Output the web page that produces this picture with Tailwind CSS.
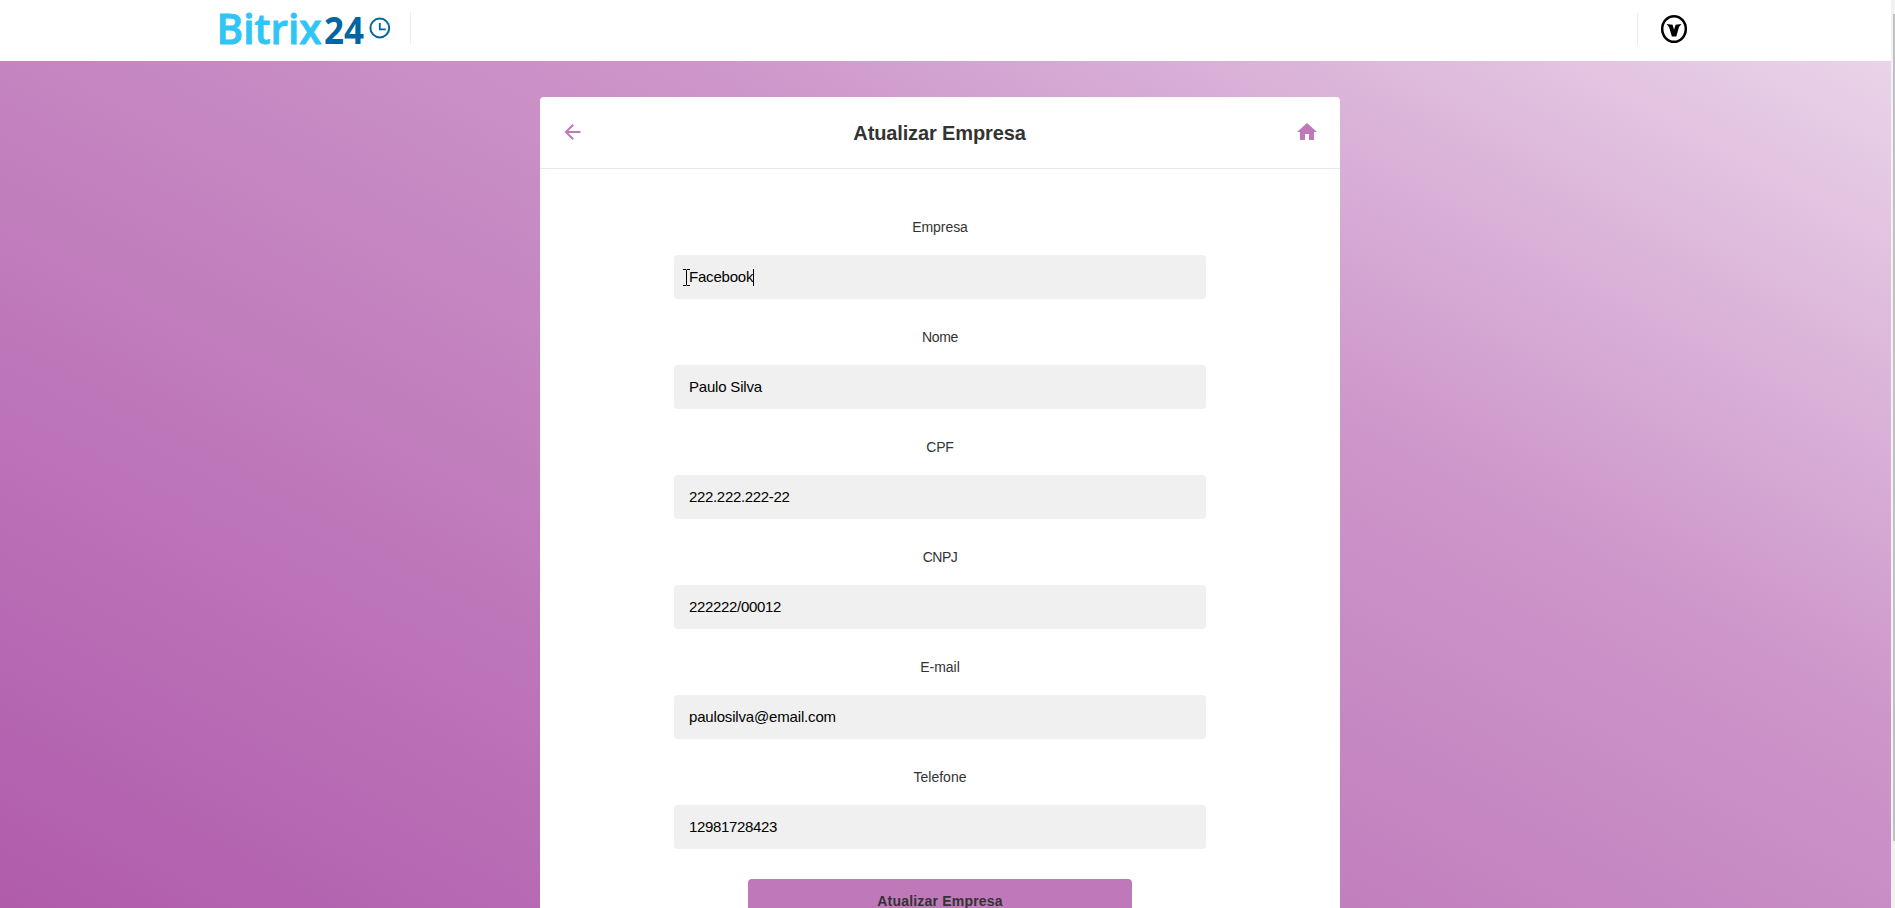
<!DOCTYPE html>
<html lang="pt-BR">
<head>
<meta charset="utf-8">
<title>Atualizar Empresa</title>
<script src="https://cdn.jsdelivr.net/npm/@tailwindcss/browser@4"></script>
</head>
<body class="flex h-[908px] overflow-hidden bg-[#f1f1f1] font-['Liberation_Sans',Arial,sans-serif] text-[#333]">
<div class="flex h-full w-[1891px] flex-col">
  <header class="flex h-[61px] shrink-0 items-start justify-between bg-white pr-[203px] pl-[216px]">
    <div class="flex items-start">
      <svg class="h-[60px] w-[194px] overflow-visible" viewBox="0 0 194 60" role="img">
        <g font-family="Open Sans, sans-serif" font-weight="600">
          <text x="0.500" y="43.700" font-size="41.500" textLength="105" lengthAdjust="spacingAndGlyphs" fill="#2fc6f6" stroke="#2fc6f6" stroke-width="0.9">Bitrix</text>
          <text x="108" y="44" font-size="37" font-weight="700" textLength="40" lengthAdjust="spacingAndGlyphs" fill="#0066a1">24</text>
        </g>
        <circle cx="163.800" cy="28" r="9.400" fill="none" stroke="#0066a1" stroke-width="2"/>
        <path d="M163.800 23v6.300h6" fill="none" stroke="#0066a1" stroke-width="1.800"/>
      </svg>
      <div class="mt-3 h-8 w-px bg-[#ececec]"></div>
    </div>
    <div class="flex items-start pt-[13px]">
      <div class="mr-[22px] h-8 w-px bg-[#ececec]"></div>
      <svg class="mt-px h-[30px] w-7" viewBox="0 0 28 30">
        <ellipse cx="14" cy="15" rx="11.800" ry="12.800" fill="none" stroke="#000" stroke-width="2.500"/>
        <path d="M6.600 10l6 .8L14 15.800l1.600-5 5.800-.8-2.400 3-2.700 9.600h-4.400L9 13z"/>
      </svg>
    </div>
  </header>
  <main class="flex min-h-0 flex-1 items-start justify-center overflow-hidden bg-[linear-gradient(28.7deg,#b05cab_0%,#cd96ca_65%,#ead4e9_100%)] pt-9 pr-[11px]">
    <section class="h-[811px] w-[800px] overflow-hidden rounded-t bg-white">
      <div class="flex h-[72px] items-center justify-between border-b border-[#e8e8e8] pr-[21px] pb-px pl-5">
        <svg class="size-6 fill-[#bf79ba]" viewBox="0 0 24 24"><path d="M20.500 11H8.330l5.590-5.590L12.500 4l-8 8 8 8 1.410-1.410L8.330 13H20.500z"/></svg>
        <h1 class="pt-0.5 text-xl font-bold tracking-[-0.13px]">Atualizar Empresa</h1>
        <svg class="size-6 fill-[#bf79ba]" viewBox="0 0 24 24"><path d="M10 20v-6h4v6h5v-8h3L12 3 2 12h3v8z"/></svg>
      </div>
      <form class="flex flex-col items-center pt-[50px] text-center">
        <label class="h-9 text-sm leading-[16px] tracking-[-0.05px]">Empresa</label>
        <div class="relative mb-[30px] flex h-11 w-[532px] items-center rounded bg-[#f0f0f0] pl-[15px] text-[15px] tracking-[-0.2px] text-black"><span>Facebook</span><span class="h-[17px] w-px bg-black"></span>
          <svg class="absolute top-[14px] left-[8px] h-[17px] w-[9px]" viewBox="0 0 9 17"><path d="M1 .5h3l.5.5.5-.5h3M4.500 1v15M1 16.500h3l.5-.5.5.5h3" fill="none" stroke="#000"/></svg>
        </div>
        <label class="h-9 text-sm leading-[16px] tracking-[-0.3px]">Nome</label>
        <div class="mb-[30px] flex h-11 w-[532px] items-center rounded bg-[#f0f0f0] pl-[15px] text-[15px] tracking-[-0.2px] text-black">Paulo Silva</div>
        <label class="h-9 text-sm leading-[16px] tracking-[-0.2px]">CPF</label>
        <div class="mb-[30px] flex h-11 w-[532px] items-center rounded bg-[#f0f0f0] pl-[15px] text-[15px] tracking-[-0.33px] text-black">222.222.222-22</div>
        <label class="h-9 text-sm leading-[16px] tracking-[-0.5px]">CNPJ</label>
        <div class="mb-[30px] flex h-11 w-[532px] items-center rounded bg-[#f0f0f0] pl-[15px] text-[15px] tracking-[-0.33px] text-black">222222/00012</div>
        <label class="h-9 text-sm leading-[16px]">E-mail</label>
        <div class="mb-[30px] flex h-11 w-[532px] items-center rounded bg-[#f0f0f0] pl-[15px] text-[15px] tracking-[-0.17px] text-black">paulosilva@email.com</div>
        <label class="h-9 text-sm leading-[16px]">Telefone</label>
        <div class="mb-[30px] flex h-11 w-[532px] items-center rounded bg-[#f0f0f0] pl-[15px] text-[15px] tracking-[-0.35px] text-black">12981728423</div>
        <button type="button" class="h-11 w-[384px] rounded bg-[#bf79ba] text-sm font-bold tracking-[0.2px]">Atualizar Empresa</button>
      </form>
    </section>
  </main>
</div>
<div class="flex flex-1 flex-col items-end pt-[14px]"><div class="h-[827px] w-[2px] bg-[#c1c1c1]"></div></div>
</body>
</html>
